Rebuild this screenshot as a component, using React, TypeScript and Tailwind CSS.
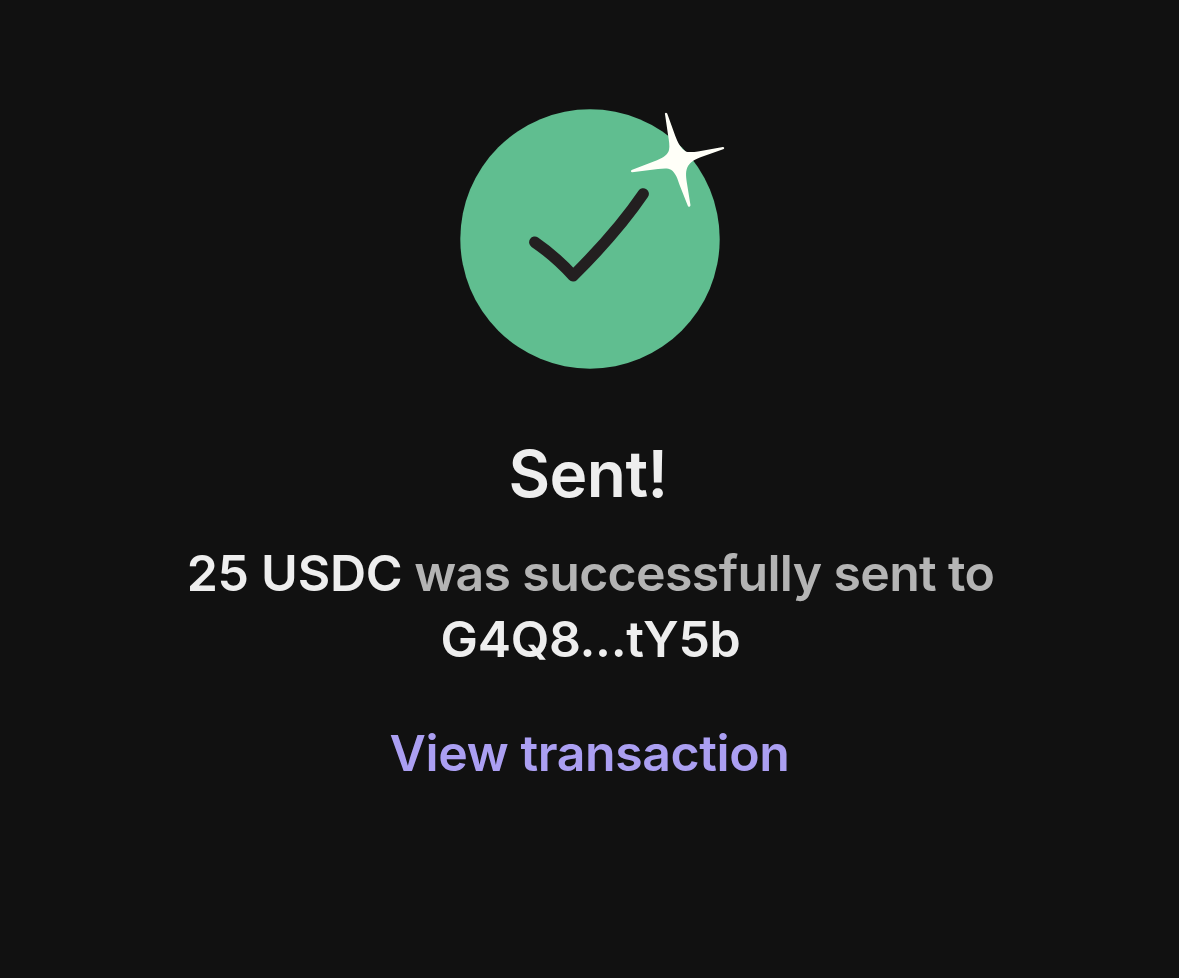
import React from 'react';

function SuccessIcon() {
  return (
    <svg className="h-[260px] w-[260px] overflow-visible" viewBox="0 0 260 260" fill="none" aria-hidden="true">
      <circle cx="130" cy="130" r="129.7" fill="#60BE90" />
      <path
        d="M74.8 133.2Q95 147 113.2 166.8Q157.3 123 183.2 84.9"
        stroke="#231F20"
        strokeWidth="11.4"
        strokeLinecap="round"
        strokeLinejoin="round"
      />
      {/* sparkle */}
      <path
        d="M204.9 4.4Q206 3 207.2 4.6L215.3 27C218 34 221 39.5 225.5 42.2C228 43.6 234 42.9 238 42.4L262.9 38Q265 38.4 263.8 40L240.5 48.2C234 50.5 229.5 53.5 227.3 58.5C225.2 63.5 226.3 69 226.9 74L230.5 96.2Q229.9 98.6 228 97.2L219.6 76C217.5 70 215.8 64 211 60.8C208 59 203 59.6 198 60.1L172.2 63.3Q170 62.4 171.6 60.9L197 51.2C203 48.8 207.8 46 209 41C210 37 208.8 31 208.2 27L204.9 4.4Z"
        fill="#FFFFF8"
      />
    </svg>
  );
}

export default function App() {
  return (
    <main className="flex h-[978px] w-full flex-col items-center bg-[#111111] pt-[109px] text-center font-['Inter',sans-serif] text-[#EEEEEE]">
      <SuccessIcon />

      <h1 className="mt-[65px] pr-[3px] text-[64px] leading-[80px] font-semibold tracking-[-0.6px]">Sent!</h1>

      <p className="mt-[26px] pl-[2px] text-[50px] leading-[66px] font-semibold tracking-[-0.65px] text-[#B4B4B4]">
        <span className="tracking-[-0.25px] text-[#EEEEEE]">25 USDC</span> was successfully sent to
        <br />
        <span className="tracking-[-0.35px] text-[#EEEEEE]">G4Q8...tY5b</span>
      </p>

      <a href="#" className="mt-[48px] text-[50px] leading-[66px] font-semibold tracking-[-0.4px] text-[#AB9FF2]">
        View transaction
      </a>
    </main>
  );
}
